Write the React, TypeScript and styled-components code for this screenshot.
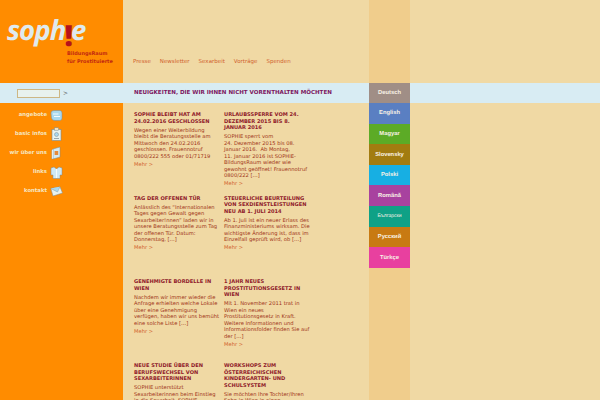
import React from "react";
import styled, { createGlobalStyle } from "styled-components";

const GlobalStyle = createGlobalStyle`
	html, body {
		margin: 0;
		padding: 0;
		height: 400px;
		overflow: hidden;
		background: #f0d9a4;
		font-family: "DejaVu Sans", Verdana, sans-serif;
		text-rendering: geometricPrecision;
	}
`;

const Page = styled.div`
	display: grid;
	grid-template-columns: 123px 246px 41px 1fr;
	grid-template-rows: 83px 20px 297px;
	width: 600px;
	height: 400px;
	overflow: hidden;
`;

const LogoCell = styled.div`
	grid-column: 1;
	grid-row: 1;
	background: #ff8c00;
	padding: 15px 0 0 7px;
`;

const LogoWord = styled.div`
	font-family: "Open Sans", sans-serif;
	font-style: italic;
	font-weight: 700;
	font-size: 27.5px;
	line-height: 32px;
	letter-spacing: -0.9px;
	color: #dfeaee;
`;

const LogoMark = styled.span`
	position: relative;
	top: 6px;
	font-size: 29px;
	font-weight: 800;
	font-style: normal;
	line-height: 0;
	margin: 0 -1px;
	color: #b5121b;
`;

const LogoSub = styled.div`
	margin: 3px 0 0 60px;
	font-family: "DejaVu Sans", sans-serif;
	font-weight: 700;
	font-size: 5px;
	line-height: 8px;
	white-space: nowrap;
	color: #c32a10;
`;

const TopNav = styled.nav`
	grid-column: 2;
	grid-row: 1;
	display: flex;
	align-items: flex-end;
	gap: 9px;
	padding: 0 0 17px 10px;
`;

const TopLink = styled.a`
	font-size: 5.5px;
	line-height: 7px;
	color: #d0622e;
	white-space: nowrap;
`;

const Band = styled.div`
	grid-column: 1 / -1;
	grid-row: 2;
	display: flex;
	align-items: center;
	background: #d8ecf3;
`;

const SearchBox = styled.div`
	display: flex;
	align-items: center;
	gap: 3px;
	width: 123px;
	padding-left: 17px;
	box-sizing: border-box;
	font-size: 6px;
	color: #555;
`;

const SearchInput = styled.div`
	width: 43px;
	height: 9px;
	box-sizing: border-box;
	border: 1px solid #cdb784;
	background: #e8f2ee;
`;

const BandTitle = styled.h2`
	margin: 0 0 0 11px;
	font-size: 5.55px;
	font-weight: 700;
	color: #7c1660;
	white-space: nowrap;
`;

const SideNav = styled.nav`
	grid-column: 1;
	grid-row: 3;
	display: flex;
	flex-direction: column;
	gap: 3px;
	background: #ff8c00;
	padding: 4px 60px 0 0;
`;

const SideItem = styled.a`
	display: flex;
	align-items: center;
	justify-content: flex-end;
	gap: 3px;
	height: 16px;
	font-size: 5.3px;
	font-weight: 700;
	color: #f6e6c2;
	white-space: nowrap;
	svg {
		flex: none;
	}
`;

const Content = styled.main`
	grid-column: 2;
	grid-row: 3;
	display: grid;
	grid-template-columns: 90px 90px;
	grid-auto-rows: 83.7px;
	padding: 9px 0 0 11px;
`;

const Article = styled.article`
	width: 86px;
`;

const ArticleTitle = styled.h3`
	margin: 0 0 2.5px;
	font-size: 5.1px;
	line-height: 6.5px;
	font-weight: 700;
	color: #8f1a2a;
`;

const ArticleText = styled.p`
	margin: 0;
	font-size: 5.2px;
	line-height: 6.5px;
	color: #a03418;
`;

const More = styled.a`
	display: block;
	margin-top: 1.7px;
	font-size: 5.2px;
	line-height: 6.5px;
	color: #d0622e;
`;

const LangColumn = styled.aside`
	grid-column: 3;
	grid-row: 1 / 4;
	display: flex;
	flex-direction: column;
	background: #f0cd8c;
	padding-top: 82.5px;
`;

const LangItem = styled.a<{ $bg: string; $small?: boolean }>`
	display: flex;
	align-items: center;
	justify-content: center;
	height: 20.6px;
	flex: none;
	background: ${(props) => props.$bg};
	color: #f8f2e6;
	font-family: "Liberation Sans", sans-serif;
	font-size: ${(props) => (props.$small ? "5px" : "5.8px")};
	font-weight: ${(props) => (props.$small ? 400 : 700)};
	white-space: nowrap;
`;

const iconStroke = "#7a8a90";

const BubbleIcon = () => (
	<svg width="13" height="13" viewBox="0 0 13 13">
		<path d="M1 4 Q1 1.5 4 1.5 H10 Q12 1.5 12 4 V9 Q12 11.5 9.5 11.5 H5 Q2 11.5 1.5 9 Z" fill="#a9d8ee" stroke={iconStroke} strokeWidth="0.5" />
		<path d="M3 5 H8.5 M4 7.5 H10" stroke="#f4fafc" strokeWidth="1.2" />
	</svg>
);

const ClipboardIcon = () => (
	<svg width="13" height="14" viewBox="0 0 13 14">
		<rect x="2" y="2.5" width="9" height="11" fill="#e8f2ee" stroke={iconStroke} strokeWidth="0.6" />
		<rect x="4.5" y="0.8" width="4" height="2.4" fill="#f6e6c2" stroke={iconStroke} strokeWidth="0.5" />
		<circle cx="6.5" cy="7.5" r="2" fill="#a9d8ee" stroke={iconStroke} strokeWidth="0.5" />
		<path d="M4 11.5 H9" stroke={iconStroke} strokeWidth="0.7" />
	</svg>
);

const BookIcon = () => (
	<svg width="13" height="14" viewBox="0 0 13 14">
		<path d="M3 3 L10 1 V11 L3 13 Z" fill="#d4ebf4" stroke={iconStroke} strokeWidth="0.5" />
		<path d="M3 3 L1.8 4 V13 L3 13" fill="#f4fafc" stroke={iconStroke} strokeWidth="0.4" />
		<rect x="4.6" y="5" width="3.6" height="4" fill="#e58a3c" />
	</svg>
);

const ShirtIcon = () => (
	<svg width="13" height="13" viewBox="0 0 13 13">
		<path d="M1 2 L4 1 L6.5 3 L9 1 L12 2 V9 L10 9 V12.5 H3 V9 L1 9 Z" fill="#cfe8f3" stroke={iconStroke} strokeWidth="0.5" />
		<path d="M6.5 3 V12" stroke="#f4fafc" strokeWidth="1" />
	</svg>
);

const MailIcon = () => (
	<svg width="13" height="11" viewBox="0 0 13 11">
		<path d="M0.8 2.5 L10 0.8 L12.5 7 L3 10 Z" fill="#e8f2ee" stroke={iconStroke} strokeWidth="0.5" />
		<path d="M0.8 2.5 L7.5 6 L10 0.8" fill="#a9d8ee" stroke={iconStroke} strokeWidth="0.4" />
	</svg>
);

const sideItems = [
	{ label: "angebote", icon: <BubbleIcon /> },
	{ label: "basic infos", icon: <ClipboardIcon /> },
	{ label: "wir über uns", icon: <BookIcon /> },
	{ label: "links", icon: <ShirtIcon /> },
	{ label: "kontakt", icon: <MailIcon /> },
];

const topLinks = ["Presse", "Newsletter", "Sexarbeit", "Vorträge", "Spenden"];

const languages = [
	{ label: "Deutsch", bg: "#a08e86" },
	{ label: "English", bg: "#5a7fc2" },
	{ label: "Magyar", bg: "#5cab26" },
	{ label: "Slovensky", bg: "#a27c10" },
	{ label: "Polski", bg: "#17afe3" },
	{ label: "Română", bg: "#a8429f" },
	{ label: "Български", bg: "#0fa186", small: true },
	{ label: "Русский", bg: "#c87a12" },
	{ label: "Türkçe", bg: "#e8409f" },
];

const articles = [
	{
		title: "SOPHIE BLEIBT HAT AM 24.02.2016 GESCHLOSSEN",
		text: "Wegen einer Weiterbildung bleibt die Beratungsstelle am Mittwoch den 24.02.2016 geschlossen. Frauennotruf 0800/222 555 oder 01/71719",
	},
	{
		title: "URLAUBSSPERRE VOM 24. DEZEMBER 2015 BIS 8. JANUAR 2016",
		text: "SOPHIE sperrt vom 24.\u00a0Dezember 2015 bis 08. Januar 2016.\u00a0 Ab Montag, 11.\u00a0Januar 2016 ist SOPHIE-BildungsRaum wieder wie gewohnt geöffnet! Frauennotruf 0800/222 […]",
	},
	{
		title: "TAG DER OFFENEN TÜR",
		text: "Anlässlich des “Internationalen Tages gegen Gewalt gegen Sexarbeiter!nnen” laden wir in unsere Beratungsstelle zum Tag der offenen Tür. Datum: Donnerstag, […]",
	},
	{
		title: "STEUERLICHE BEURTEILUNG VON SEXDIENSTLEISTUNGEN NEU AB 1. JULI 2014",
		text: "Ab 1. Juli ist ein neuer Erlass des Finanzministeriums wirksam. Die wichtigste Änderung ist, dass im Einzelfall geprüft wird, ob […]",
	},
	{
		title: "GENEHMIGTE BORDELLE IN WIEN",
		text: "Nachdem wir immer wieder die Anfrage erhielten welche Lokale über eine Genehmigung verfügen, haben wir uns bemüht eine solche Liste […]",
	},
	{
		title: "1 JAHR NEUES PROSTITUTIONSGESETZ IN WIEN",
		text: "Mit 1. November 2011 trat in Wien ein neues Prostitutionsgesetz in Kraft. Weitere Informationen und Informationsfolder finden Sie auf der […]",
	},
	{
		title: "NEUE STUDIE ÜBER DEN BERUFSWECHSEL VON SEXARBEITERINNEN",
		text: "SOPHIE unterstützt Sexarbeiterinnen beim Einstieg in die Sexarbeit. SOPHIE",
	},
	{
		title: "WORKSHOPS ZUM ÖSTERREICHISCHEN KINDERGARTEN- UND SCHULSYSTEM",
		text: "Sie möchten Ihre Tochter/Ihren Sohn in Wien in einen",
	},
];

function App() {
	return (
		<Page>
			<GlobalStyle />
			<LogoCell>
				<LogoWord>
					soph<LogoMark>!</LogoMark>e
				</LogoWord>
				<LogoSub>
					BildungsRaum
					<br />
					für Prostituierte
				</LogoSub>
			</LogoCell>
			<TopNav>
				{topLinks.map((link) => (
					<TopLink key={link}>{link}</TopLink>
				))}
			</TopNav>
			<Band>
				<SearchBox>
					<SearchInput />
					&gt;
				</SearchBox>
				<BandTitle>NEUIGKEITEN, DIE WIR IHNEN NICHT VORENTHALTEN MÖCHTEN</BandTitle>
			</Band>
			<SideNav>
				{sideItems.map((item) => (
					<SideItem key={item.label}>
						{item.label}
						{item.icon}
					</SideItem>
				))}
			</SideNav>
			<Content>
				{articles.map((article) => (
					<Article key={article.title}>
						<ArticleTitle>{article.title}</ArticleTitle>
						<ArticleText>{article.text}</ArticleText>
						<More>Mehr &gt;</More>
					</Article>
				))}
			</Content>
			<LangColumn>
				{languages.map((lang) => (
					<LangItem key={lang.label} $bg={lang.bg} $small={lang.small}>
						{lang.label}
					</LangItem>
				))}
			</LangColumn>
		</Page>
	);
}

export default App;
